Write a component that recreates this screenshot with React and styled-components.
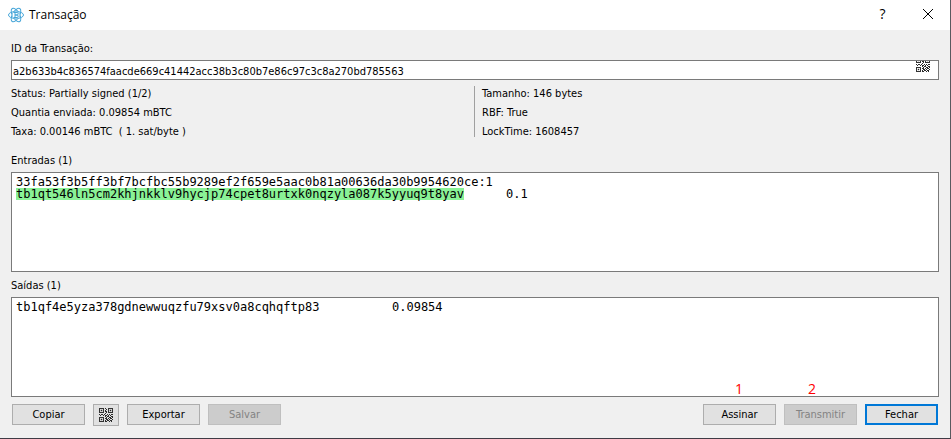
import React from 'react'
import styled, { createGlobalStyle } from 'styled-components'

const GlobalStyle = createGlobalStyle`
    * {
        box-sizing: border-box;
    }

    body {
        margin: 0;
        background: #f0f0f0;
        color: #000;
        font: 11px/19px "DejaVu Sans Condensed", "DejaVu Sans", sans-serif;
    }

    button, input {
        font: inherit;
        color: inherit;
    }
`

const Dialog = styled.main`
    display: flex;
    flex-direction: column;
    min-height: 100vh;
    background: #f0f0f0;
    border-right: 1px solid #5a5a5f;
    border-bottom: 1px solid #3f3b45;
`

const TitleBar = styled.header`
    display: flex;
    align-items: center;
    height: 30px;
    padding-left: 8px;
    background: #fff;
`

const Title = styled.h1`
    flex: 1;
    margin: 0 0 0 5px;
    font: 12px/18px "Open Sans", sans-serif;
`

const TitleButton = styled.button`
    display: flex;
    align-items: center;
    justify-content: center;
    width: 45px;
    height: 30px;
    padding: 0 0 2px;
    border: 0;
    background: transparent;
    color: #000;
    font: 14px/18px "Open Sans", sans-serif;
`

const Content = styled.div`
    flex: 1;
    display: flex;
    flex-direction: column;
    padding: 9px 11px 12px;
`

const Label = styled.label`
    display: block;
    padding-bottom: 2px;
`

const TxidField = styled.div`
    display: flex;
    height: 20px;
    border: 1px solid #7a7a7a;
    background: #fff;
`

const TxidInput = styled.input`
    flex: 1;
    min-width: 0;
    padding: 2px 1px 0;
    border: 0;
    outline: 0;
    background: transparent;
`

const FieldButton = styled.button`
    display: flex;
    align-items: flex-end;
    height: 11px;
    margin-right: 8px;
    padding: 0;
    border: 0;
    overflow: hidden;
    background: transparent;
`

const Summary = styled.div`
    display: grid;
    grid-template-columns: 1fr 1fr;
    padding-top: 4px;
`

const SummaryColumn = styled.div`
    position: relative;
    padding-left: ${props => props.$divided ? '7px' : '0'};

    &::before {
        content: "";
        display: ${props => props.$divided ? 'block' : 'none'};
        position: absolute;
        top: 2px;
        bottom: 4px;
        left: -1px;
        border-left: 1px solid #a0a0a0;
    }
`

const SummaryLine = styled.p`
    margin: 0;
    white-space: pre;
`

const Section = styled.section`
    flex: 1;
    display: flex;
    flex-direction: column;
    padding-top: ${props => props.$first ? '10px' : '4px'};
`

const SectionTitle = styled.h2`
    margin: 0;
    padding-bottom: 2px;
    font: inherit;
`

const TextBox = styled.div`
    flex: 1;
    min-height: 48px;
    padding: 3px 4px;
    border: 1px solid #7a7a7a;
    background: #fff;
    font: 12px/12px "DejaVu Sans Mono", monospace;
`

const CoinLine = styled.div`
    display: flex;
    white-space: pre;
`

const Address = styled.span`
    min-width: ${props => props.$column}px;
`

const OwnAddress = styled.mark`
    display: inline-block;
    color: inherit;
    background: #8af296;
`

const Buttons = styled.footer`
    display: flex;
    align-items: flex-start;
    gap: 8px;
    padding: 7px 1px 0;
`

const Spacer = styled.div`
    flex: 1;
`

const Button = styled.button`
    display: flex;
    align-items: center;
    justify-content: center;
    width: ${props => props.$icon ? '26px' : '73px'};
    height: ${props => props.$icon ? '22px' : '21px'};
    padding: 0;
    border: ${props => props.$primary ? '2px solid #0078d7' : '1px solid #adadad'};
    background: #e1e1e1;

    &:disabled {
        color: #838383;
        border-color: #bfbfbf;
        background: #ccc;
    }
`

const Step = styled.div`
    position: relative;
`

const StepNumber = styled.span`
    position: absolute;
    bottom: 27px;
    left: ${props => props.$left}px;
    color: #f00;
    font: 14px/18px "Open Sans", sans-serif;
`

const QrSvg = styled.svg`
    flex-shrink: 0;
`

const QR_ROWS = [
    '......1.......',
    '.......1......',
    '......1.......',
    '......11......',
    '.......1......',
    '......1.......',
    '1.11.1..1.1.11',
    '.1..1.11.1.1..',
    '......1.11..11',
    '.......1..11.1',
    '......11.1.11.',
    '.......11.1..1',
    '......1.11.11.',
    '......11..1.1.',
]

const qrPath = QR_ROWS.map((row, y) => (
    [...row].map((cell, x) => cell === '1' ? `M${x} ${y}h1v1h-1z` : '').join('')
)).join('')

const QR_FINDERS = [[0, 0], [9, 0], [0, 9]]

const QrIcon = () => (
    <QrSvg width="14" height="14" viewBox="0 0 14 14" aria-hidden="true">
        <path d={qrPath} fill="#2b2b2b" />
        {QR_FINDERS.map(([x, y]) => (
            <g key={`${x}-${y}`}>
                <rect x={x + 0.5} y={y + 0.5} width="4" height="4" fill="none" stroke="#333" />
                <rect x={x + 1.8} y={y + 1.8} width="1.4" height="1.4" fill="#222" />
            </g>
        ))}
    </QrSvg>
)

const ElectrumIcon = () => (
    <svg width="16" height="16" viewBox="0 0 32 32" fill="none" stroke="#45a5d8" strokeWidth="2" aria-hidden="true">
        <ellipse cx="16" cy="16" rx="15" ry="7" />
        <ellipse cx="16" cy="16" rx="15" ry="7" transform="rotate(60 16 16)" />
        <ellipse cx="16" cy="16" rx="15" ry="7" transform="rotate(120 16 16)" />
        <circle cx="16" cy="16" r="7" fill="#fff" stroke="none" />
        <path d="M11 11h7a2 2 0 0 1 0 5h-4h4a2 2 0 0 1 0 5h-7M14 11v10" />
    </svg>
)

const CloseIcon = () => (
    <svg width="12" height="12" viewBox="0 0 12 12" stroke="#000" aria-hidden="true">
        <path d="M1 1l10 10M11 1L1 11" />
    </svg>
)

const inputs = [
    {
        outpoint: '33fa53f3b5ff3bf7bcfbc55b9289ef2f659e5aac0b81a00636da30b9954620ce:1',
        address: 'tb1qt546ln5cm2khjnkklv9hycjp74cpet8urtxk0nqzyla087k5yyuq9t8yav',
        amount: '0.1',
    },
]

const outputs = [
    { address: 'tb1qf4e5yza378gdnewwuqzfu79xsv0a8cqhqftp83', amount: '0.09854' },
]

const App = () => {
    return (
        <>
            <GlobalStyle />
            <Dialog>
                <TitleBar>
                    <ElectrumIcon />
                    <Title>Transação</Title>
                    <TitleButton type="button" aria-label="Ajuda">?</TitleButton>
                    <TitleButton type="button" aria-label="Fechar janela"><CloseIcon /></TitleButton>
                </TitleBar>
                <Content>
                    <Label htmlFor="txid">ID da Transação:</Label>
                    <TxidField>
                        <TxidInput
                            id="txid"
                            readOnly
                            value="a2b633b4c836574faacde669c41442acc38b3c80b7e86c97c3c8a270bd785563"
                        />
                        <FieldButton type="button" aria-label="QR"><QrIcon /></FieldButton>
                    </TxidField>
                    <Summary>
                        <SummaryColumn>
                            <SummaryLine>Status: Partially signed (1/2)</SummaryLine>
                            <SummaryLine>Quantia enviada: 0.09854 mBTC</SummaryLine>
                            <SummaryLine>{'Taxa: 0.00146 mBTC  ( 1. sat/byte )'}</SummaryLine>
                        </SummaryColumn>
                        <SummaryColumn $divided>
                            <SummaryLine>Tamanho: 146 bytes</SummaryLine>
                            <SummaryLine>RBF: True</SummaryLine>
                            <SummaryLine>LockTime: 1608457</SummaryLine>
                        </SummaryColumn>
                    </Summary>
                    <Section $first>
                        <SectionTitle>Entradas ({inputs.length})</SectionTitle>
                        <TextBox>
                            {inputs.map(i => (
                                <div key={i.outpoint}>
                                    <CoinLine>{i.outpoint}</CoinLine>
                                    <CoinLine>
                                        <Address $column={490}><OwnAddress>{i.address}</OwnAddress></Address>
                                        <span>{i.amount}</span>
                                    </CoinLine>
                                </div>
                            ))}
                        </TextBox>
                    </Section>
                    <Section>
                        <SectionTitle>Saídas ({outputs.length})</SectionTitle>
                        <TextBox>
                            {outputs.map(o => (
                                <CoinLine key={o.address}>
                                    <Address $column={376}>{o.address}</Address>
                                    <span>{o.amount}</span>
                                </CoinLine>
                            ))}
                        </TextBox>
                    </Section>
                    <Buttons>
                        <Button type="button">Copiar</Button>
                        <Button type="button" $icon aria-label="Mostrar QR"><QrIcon /></Button>
                        <Button type="button">Exportar</Button>
                        <Button type="button" disabled>Salvar</Button>
                        <Spacer />
                        <Step>
                            <StepNumber $left={32}>1</StepNumber>
                            <Button type="button">Assinar</Button>
                        </Step>
                        <Step>
                            <StepNumber $left={24}>2</StepNumber>
                            <Button type="button" disabled>Transmitir</Button>
                        </Step>
                        <Button type="button" $primary>Fechar</Button>
                    </Buttons>
                </Content>
            </Dialog>
        </>
    )
}

export default App
